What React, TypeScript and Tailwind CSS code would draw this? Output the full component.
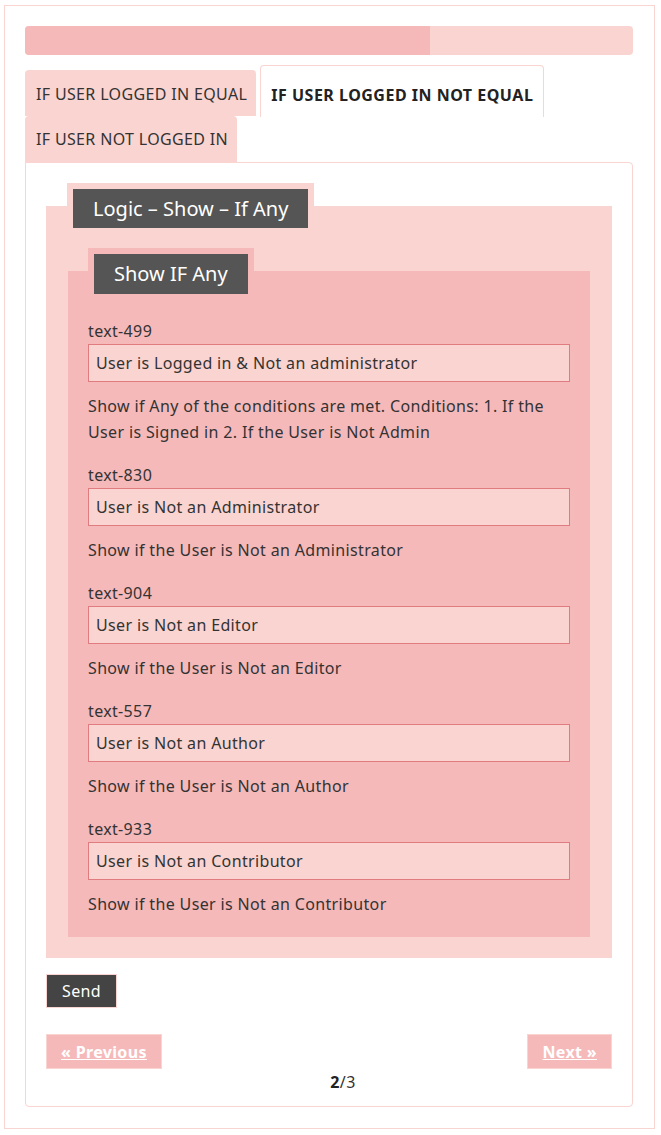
type Field = {
  name: string;
  value: string;
  help: string;
};

const fields: Field[] = [
  {
    name: 'text-499',
    value: 'User is Logged in & Not an administrator',
    help: 'Show if Any of the conditions are met. Conditions: 1. If the User is Signed in 2. If the User is Not Admin'
  },
  {
    name: 'text-830',
    value: 'User is Not an Administrator',
    help: 'Show if the User is Not an Administrator'
  },
  {
    name: 'text-904',
    value: 'User is Not an Editor',
    help: 'Show if the User is Not an Editor'
  },
  {
    name: 'text-557',
    value: 'User is Not an Author',
    help: 'Show if the User is Not an Author'
  },
  {
    name: 'text-933',
    value: 'User is Not an Contributor',
    help: 'Show if the User is Not an Contributor'
  }
];

const font = { fontFamily: '"Noto Sans", "Open Sans", Arial, sans-serif' };

export default function App() {
  return (
    <div className="bg-white min-h-screen pl-[4px] pt-[5px] text-[#333] tracking-[0.35px]" style={font}>
      <div className="w-[651px] border border-[#fad4d0] pl-[20px] pr-[21px] pt-[20px] pb-[21px]">
        {/* progress */}
        <div className="h-[29px] rounded-[4px] bg-[#fad4d0] overflow-hidden">
          <div className="h-full w-[66.6%] bg-[#f6b9ba]" />
        </div>

        {/* tabs */}
        <div className="mt-[10px] flex flex-wrap items-end">
          <div className="h-[46px] pl-[11px] pr-[9px] pt-[2px] mr-[4px] flex items-center bg-[#fad4d0] rounded-t-[4px] text-[16px] uppercase">
            If User Logged In Equal
          </div>
          <div className="h-[52px] px-[10px] pt-[7px] -mb-px flex items-center bg-white border border-b-0 border-[#fad4d0] rounded-t-[4px] text-[16px] font-bold uppercase text-[#222] tracking-[0.5px]">
            If User Logged In Not Equal
          </div>
          <div className="h-[46px] pl-[11px] pr-[9px] flex items-center bg-[#fad4d0] rounded-t-[4px] text-[16px] uppercase">
            If User Not Logged In
          </div>
        </div>

        {/* panel */}
        <div className="border border-[#fad4d0] rounded-b-[4px] rounded-tr-[4px] pl-[20px] pr-[20px] pt-[20px] pb-[11px]">
          <fieldset className="bg-[#fad4d0] px-[22px] pt-[20px] pb-[21px]">
            <legend className="-ml-px bg-[#fad4d0] pt-[6px] px-[6px] tracking-normal">
              <span className="block bg-[#555] text-white text-[20px] leading-[39px] h-[39px] px-[20px]">
                Logic – Show – If Any
              </span>
            </legend>

            <fieldset className="bg-[#f6b9ba] px-[20px] pt-[24px] pb-[20px]">
              <legend className="bg-[#f6b9ba] pt-[6px] px-[6px] tracking-normal">
                <span className="block bg-[#555] text-white text-[20px] leading-[40px] h-[40px] px-[20px]">
                  Show IF Any
                </span>
              </legend>

              <div className="flex flex-col gap-[17px]">
                {fields.map((f) => (
                  <div key={f.name} className="text-[16px] leading-[26px]">
                    <label className="block">{f.name}</label>
                    <div className="h-[38px] border border-[#e07b7f] bg-[#fad4d0] pl-[7px] flex items-center">
                      {f.value}
                    </div>
                    <p className="mt-[11px]">{f.help}</p>
                  </div>
                ))}
              </div>
            </fieldset>
          </fieldset>

          <button className="mt-[16px] h-[34px] px-[15px] bg-[#444] border border-[#fad4d0] text-white text-[16px]">
            Send
          </button>

          <div className="mt-[26px] flex justify-between">
            <a className="h-[35px] px-[14px] flex items-center bg-[#f6b9ba] border border-[#fad4d0] text-white font-bold underline text-[16px]">
              « Previous
            </a>
            <a className="h-[35px] px-[14px] flex items-center bg-[#f6b9ba] border border-[#fad4d0] text-white font-bold underline text-[16px]">
              Next »
            </a>
          </div>

          <div className="pl-[28px] text-center text-[16px] leading-[26px]">
            <b className="text-[#222]">2</b>/3
          </div>
        </div>
      </div>
    </div>
  );
}
